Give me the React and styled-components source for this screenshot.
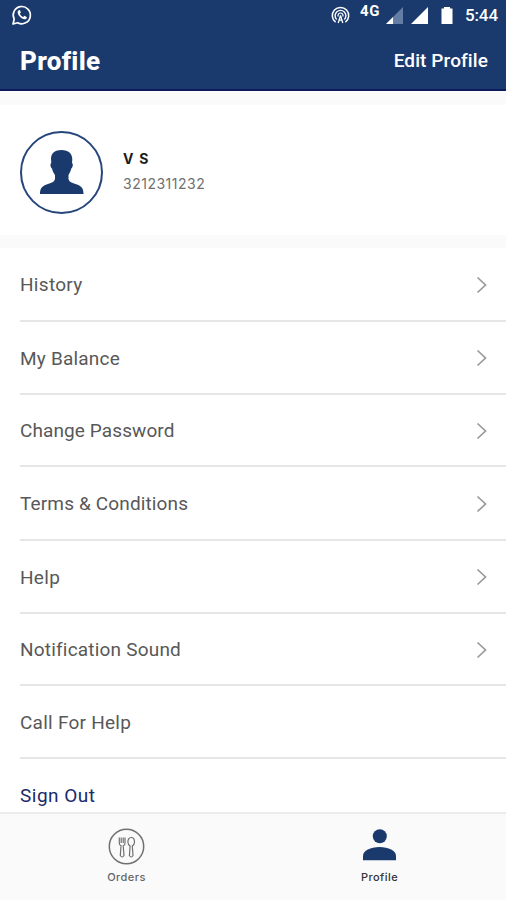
import styled, { createGlobalStyle, css } from 'styled-components';

const GlobalStyle = createGlobalStyle`
  :root {
    --page-color: #1a3a6e;
    --link-color: #1b2a6b;
    --text-color: #585858;
    --panel-color: #fafafa;
  }
  * {
    box-sizing: border-box;
  }
  body {
    margin: 0;
    background: #fff;
    font-family: Roboto, "Liberation Sans", sans-serif;
  }
`

const Screen = styled.div`
  display: flex;
  flex-direction: column;
  width: 506px;
  height: 900px;
  overflow: hidden;
  background: #fff;
`

const Top = styled.header`
  flex: none;
  height: 91px;
  background: var(--page-color);
  border-bottom: 2px solid #0d1b5c;
  color: #fff;
`

const StatusBar = styled.div`
  display: flex;
  justify-content: space-between;
  height: 32px;
  padding: 0 8px 0 11px;

  svg {
    display: block;
    flex: none;
  }
`

const StatusIcons = styled.div`
  display: flex;
`

const Network = styled.span`
  width: 26px;
  margin-left: 10px;
  padding-top: 2px;
  font-size: 15px;
  line-height: 18px;
  font-weight: 700;
  letter-spacing: 0.6px;
`

const Battery = styled.span`
  margin-left: 5px;
`

const Clock = styled.span`
  margin-left: 12px;
  font-size: 17px;
  line-height: 31px;
  font-weight: 500;
  letter-spacing: -0.1px;
  white-space: nowrap;
`

const TitleBar = styled.div`
  display: flex;
  justify-content: space-between;
  align-items: center;
  height: 57px;
  padding: 0 18px 0 20px;
`

const Title = styled.h1`
  margin: 0;
  font-size: 26px;
  line-height: 32px;
  font-weight: 800;
  letter-spacing: 0.3px;
`

const EditLink = styled.a`
  font-size: 19px;
  line-height: 32px;
  font-weight: 500;
  letter-spacing: 0.1px;
`

const Gap = styled.div`
  flex: none;
  height: ${props => props.$size}px;
  background: var(--panel-color);
`

const User = styled.section`
  display: flex;
  flex: none;
  height: 130px;
  padding: 26px 20px 0;
`

const Avatar = styled.div`
  width: 83px;
  height: 83px;
  border: 2px solid #26467c;
  border-radius: 50%;
  color: var(--page-color);

  svg {
    display: block;
  }
`

const UserText = styled.div`
  margin-left: 20px;
  padding-top: 16px;
  font-family: Inter, Roboto, sans-serif;
`

const Name = styled.div`
  font-size: 14px;
  line-height: 24px;
  font-weight: 700;
  letter-spacing: 1.2px;
  color: #1c1c1c;
`

const Phone = styled.div`
  font-size: 14px;
  line-height: 26px;
  letter-spacing: 0.5px;
  color: #707070;
`

const Menu = styled.ul`
  flex: 1;
  min-height: 0;
  margin: 0;
  padding: 0 0 0 20px;
  overflow: hidden;
  list-style: none;
`

const MenuItem = styled.li`
  display: flex;
  justify-content: space-between;
  align-items: center;
  height: ${props => props.$height}px;
  padding: 1px 18px 0 0;
  border-bottom: 2px solid #e6e6e6;
  font-size: 19px;
  color: var(--text-color);

  span {
    letter-spacing: ${props => props.$spacing}px;
  }

  ${props => props.$accent && css`
    color: var(--link-color);
  `}
`

const TabBar = styled.nav`
  display: flex;
  flex: none;
  height: 88px;
  border-top: 2px solid #ececec;
  background: var(--panel-color);
`

const Tab = styled.a`
  display: flex;
  flex: 1;
  flex-direction: column;
  align-items: center;
  padding-top: 14px;
  font-family: Inter, Roboto, sans-serif;
  font-size: 11px;
  line-height: 16px;
  font-weight: 500;
  letter-spacing: 0.45px;
  color: #666;

  svg {
    margin-bottom: 4px;
  }

  ${props => props.$active && css`
    color: #333;

    svg {
      color: var(--page-color);
    }
  `}
`

const items = [
  { label: 'History', height: 74, spacing: 0.3, arrow: true },
  { label: 'My Balance', height: 73, spacing: 0.2, arrow: true },
  { label: 'Change Password', height: 72, spacing: 0.1, arrow: true },
  { label: 'Terms & Conditions', height: 74, spacing: 0.14, arrow: true },
  { label: 'Help', height: 73, spacing: 0.3, arrow: true },
  { label: 'Notification Sound', height: 72, spacing: 0.2, arrow: true },
  { label: 'Call For Help', height: 73, spacing: 0.25 },
  { label: 'Sign Out', height: 73, spacing: 0.5, accent: true },
]

const WhatsAppIcon = () => (
  <svg width="22" height="32" viewBox="0 0 22 32" fill="none">
    <path d="M2 24 L3.2 19.2 A8.6 8.6 0 1 1 6.7 22.7 Z" stroke="#fff" strokeWidth="1.7" strokeLinejoin="round" />
    <path d="M7.7 10.2 C6 11.4 6.3 13.8 8.5 16.3 C10.8 19 13.7 20.3 15.5 18.5 L16 17.2 L13.4 15.8 L12.2 17 C10.8 16.5 9.4 15 8.8 13.7 L9.9 12.5 L8.9 10.1 Z" fill="#fff" />
  </svg>
)

const HotspotIcon = () => (
  <svg width="19" height="32" viewBox="0 0 19 32" fill="none" stroke="#fff">
    <path d="M4.6 22.2 A8.2 8.2 0 1 1 14.4 22.2" strokeWidth="1.5" />
    <path d="M5.7 19.6 A5.4 5.4 0 1 1 13.3 19.6" strokeWidth="1.4" />
    <path d="M7.2 16.5 A2.5 2.5 0 1 1 11.8 16.5" strokeWidth="1.2" />
    <path d="M9.5 15.5 L7.2 23 M9.5 15.5 L11.8 23 M7.8 20.2 H11.2" strokeWidth="1.3" />
  </svg>
)

const SignalIcon = ({ weak }) => (
  <svg width="25" height="32" viewBox="0 0 25 32">
    <path d="M0 24 L17 7 V24 Z" fill={weak ? '#647da4' : '#fff'} />
    {weak && <path d="M0 24 L7 17 V24 Z" fill="#fff" />}
  </svg>
)

const BatteryIcon = () => (
  <svg width="12" height="32" viewBox="0 0 12 32" fill="#fff">
    <path d="M0.5 8.5 H3 V7 H9 V8.5 H11.5 V24 H0.5 Z" />
  </svg>
)

const PersonIcon = () => (
  <svg width="79" height="79" viewBox="0 0 79 79" fill="currentColor">
    <path d="M39.5 17 C46.5 17 50.3 20.5 50.3 26.5 L50 30 C51.3 30.5 51 34.5 49.3 35.5 C48.5 39 47.3 40.5 46.5 42 V46 C47.5 49.5 51 50 55 51.5 C60.5 53.5 61.5 56.5 61.5 61 H18 C18 56.5 19 53.5 24.5 51.5 C28.5 50 32 49.5 33 46 V42 C32 40.5 30.8 39 30 35.5 C28.3 34.5 28 30.5 29.3 30 L29 26 C29 20 33 17 39.5 17 Z" />
  </svg>
)

const ChevronIcon = () => (
  <svg width="12" height="18" viewBox="0 0 12 18" fill="none" stroke="#999" strokeWidth="1.7">
    <path d="M1.5 1.5 L9.5 9 L1.5 16.5" />
  </svg>
)

const OrdersIcon = () => (
  <svg width="37" height="37" viewBox="0 0 37 37" fill="none" stroke="#707070">
    <circle cx="18.5" cy="18.5" r="17.2" strokeWidth="1.5" />
    <path d="M11.3 9.5 V15 Q11.3 17.3 13 17.8 L12.3 27.5 Q14.1 30.5 16 27.5 L15.2 17.8 Q17 17.3 17 15 V9.5 M13.2 9.5 V15 M15.2 9.5 V15" strokeWidth="1.2" />
    <path d="M23.2 9.5 C25.5 9.5 26.5 11.8 26.5 14 C26.5 16 25.5 17.3 24.3 18 L25 27.5 Q23.2 30.5 21.4 27.5 L22.1 18 C20.9 17.3 19.9 16 19.9 14 C19.9 11.8 20.9 9.5 23.2 9.5 Z" strokeWidth="1.2" />
  </svg>
)

const ProfileIcon = () => (
  <svg width="37" height="37" viewBox="0 0 37 37" fill="currentColor">
    <circle cx="18.8" cy="8.3" r="7" />
    <path d="M2 32.3 V28 C2 22.5 9.5 19 18.5 19 C27.5 19 35 22.5 35 28 V32.3 Z" />
  </svg>
)

export default function App() {
  return (
    <Screen>
      <GlobalStyle />
      <Top>
        <StatusBar>
          <WhatsAppIcon />
          <StatusIcons>
            <HotspotIcon />
            <Network>4G</Network>
            <SignalIcon weak />
            <SignalIcon />
            <Battery>
              <BatteryIcon />
            </Battery>
            <Clock>5:44</Clock>
          </StatusIcons>
        </StatusBar>
        <TitleBar>
          <Title>Profile</Title>
          <EditLink>Edit Profile</EditLink>
        </TitleBar>
      </Top>
      <Gap $size={14} />
      <User>
        <Avatar>
          <PersonIcon />
        </Avatar>
        <UserText>
          <Name>V S</Name>
          <Phone>3212311232</Phone>
        </UserText>
      </User>
      <Gap $size={13} />
      <Menu>
        {items.map(item => (
          <MenuItem key={item.label} $height={item.height} $spacing={item.spacing} $accent={item.accent}>
            <span>{item.label}</span>
            {item.arrow && <ChevronIcon />}
          </MenuItem>
        ))}
      </Menu>
      <TabBar>
        <Tab>
          <OrdersIcon />
          Orders
        </Tab>
        <Tab $active>
          <ProfileIcon />
          Profile
        </Tab>
      </TabBar>
    </Screen>
  )
}
